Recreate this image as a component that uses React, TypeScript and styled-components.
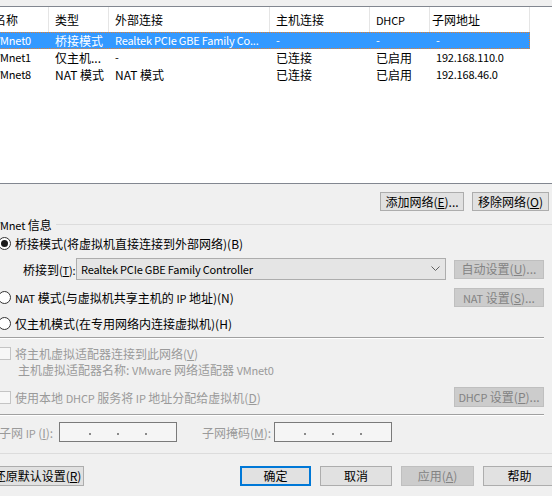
import React from 'react';
import styled, { createGlobalStyle } from 'styled-components';

const GlobalStyle = createGlobalStyle`
  html, body {
    margin: 0;
    padding: 0;
    background: #f0f0f0;
    overflow: hidden;
  }
  body {
    width: 552px;
    height: 496px;
  }
`;

const Dialog = styled.div`
  width: 572px;
  margin-left: -12px;
  padding-top: 6px;
  font-family: "Noto Sans CJK SC", "Noto Sans", sans-serif;
  font-size: 12px;
  color: #000;
`;

// latin runs in the original render narrower than the CJK text around them
const Lat = styled.span`
  font-size: 11px;
  letter-spacing: -0.2px;
`;

/* ---------- list view ---------- */

const List = styled.div`
  height: 176px;
  background: #fff;
  border-top: 1px solid #828790;
  border-bottom: 1px solid #828790;
`;

const HeaderRow = styled.div`
  display: flex;
  height: 25px;
`;

const HeaderCell = styled.div<{ $w: number; $pad?: number }>`
  width: ${p => p.$w}px;
  box-sizing: border-box;
  border-right: 1px solid #e5e5e5;
  padding-left: ${p => p.$pad ?? 6}px;
  line-height: 25px;
  white-space: nowrap;
  overflow: hidden;
`;

const Row = styled.div<{ $selected?: boolean }>`
  display: flex;
  width: 542px;
  height: 17px;
  box-sizing: border-box;
  background: ${p => (p.$selected ? '#3399ff' : 'transparent')};
  color: ${p => (p.$selected ? '#fff' : '#000')};
  outline: ${p => (p.$selected ? '1px dotted #e8802a' : 'none')};
  outline-offset: -1px;
`;

const Cell = styled.div<{ $w: number; $latin?: boolean }>`
  width: ${p => p.$w}px;
  padding-left: 6px;
  box-sizing: border-box;
  line-height: 17px;
  white-space: nowrap;
  overflow: hidden;
  font-size: ${p => (p.$latin ? '11px' : '12px')};
  letter-spacing: ${p => (p.$latin ? '-0.2px' : '0')};
`;

/* ---------- buttons ---------- */

const Button = styled.button<{ $w: number; $h?: number; $default?: boolean }>`
  width: ${p => p.$w}px;
  height: ${p => p.$h ?? 20}px;
  box-sizing: border-box;
  padding: 0;
  background: #e1e1e1;
  border: ${p => (p.$default ? '2px solid #0078d7' : '1px solid #adadad')};
  font: inherit;
  line-height: 16px;
  color: #000;
  white-space: nowrap;
  flex: none;

  &:disabled {
    background: #cccccc;
    border-color: #bfbfbf;
    color: #838383;
  }
`;

const ActionBar = styled.div`
  display: flex;
  justify-content: flex-end;
  gap: 8px;
  margin-top: 8px;
  padding-right: 11px;
`;

/* ---------- group ---------- */

const GroupTitle = styled.div`
  display: flex;
  align-items: center;
  margin-top: 6px;
  height: 15px;
  padding-left: 6px;
`;

const GroupLine = styled.div`
  flex: 1;
  margin-left: 4px;
  border-top: 1px solid #dcdcdc;
`;

const OptionRow = styled.div<{ $top: number; $h: number }>`
  display: flex;
  align-items: center;
  justify-content: space-between;
  margin-top: ${p => p.$top}px;
  height: ${p => p.$h}px;
  padding-left: 10px;
  padding-right: 16px;
`;

const Choice = styled.label<{ $disabled?: boolean }>`
  display: flex;
  align-items: center;
  gap: 4px;
  color: ${p => (p.$disabled ? '#9a9a9a' : '#000')};
  white-space: nowrap;
`;

const RadioDot = styled.span<{ $checked?: boolean }>`
  width: 13px;
  height: 13px;
  box-sizing: border-box;
  border: 1px solid #333;
  border-radius: 50%;
  background: #fff;
  display: flex;
  align-items: center;
  justify-content: center;

  &::after {
    content: '';
    display: ${p => (p.$checked ? 'block' : 'none')};
    width: 7px;
    height: 7px;
    border-radius: 50%;
    background: #1a1a1a;
  }
`;

const CheckBox = styled.span`
  width: 13px;
  height: 13px;
  box-sizing: border-box;
  border: 1px solid #c4c4c4;
  background: #f7f7f7;
`;

const BridgeRow = styled.div`
  display: flex;
  align-items: center;
  margin-top: 7px;
  height: 22px;
  padding-left: 35px;
`;

const BridgeLabel = styled.span`
  width: 53px;
  flex: none;
  white-space: nowrap;
`;

const Combo = styled.div`
  width: 370px;
  height: 22px;
  box-sizing: border-box;
  border: 1px solid #adadad;
  background: #e5e5e5;
  display: flex;
  align-items: center;
  justify-content: space-between;
  padding: 0 5px 0 4px;
  margin-right: 8px;
`;

const Separator = styled.div<{ $top: number }>`
  margin-top: ${p => p.$top}px;
  margin-right: 16px;
  border-top: 1px solid #a0a0a0;
  border-bottom: 1px solid #fff;
`;

const AdapterName = styled.div`
  margin-top: 1px;
  height: 16px;
  line-height: 16px;
  padding-left: 30px;
  color: #9a9a9a;
  white-space: nowrap;
`;

/* ---------- subnet ---------- */

const SubnetRow = styled.div`
  display: flex;
  align-items: center;
  margin-top: 6px;
  height: 20px;
  padding-left: 11px;
`;

const SubnetLabel = styled.span<{ $w: number; $gap?: number }>`
  width: ${p => p.$w}px;
  margin-left: ${p => p.$gap ?? 0}px;
  color: #9a9a9a;
  white-space: nowrap;
`;

const IpBox = styled.div`
  width: 118px;
  height: 20px;
  box-sizing: border-box;
  border: 1px solid #7a7a7a;
  background: #f5f5f5;
  display: flex;
  align-items: center;
  justify-content: center;
  gap: 26px;
`;

const IpDot = styled.span`
  width: 2px;
  height: 2px;
  margin-top: 4px;
  background: #8a8a8a;
`;

const LightLine = styled.div`
  margin-top: 11px;
  border-top: 1px solid #dcdcdc;
`;

const Footer = styled.div`
  display: flex;
  align-items: center;
  gap: 9px;
  margin-top: 12px;
  height: 20px;
  padding-left: 3px;
  padding-right: 4px;
`;

const Spacer = styled.div`
  flex: 1;
`;

const columns = [61, 60, 161, 100, 60, 100];

const rows = [
  ['VMnet0', '桥接模式', 'Realtek PCIe GBE Family Co...', '-', '-', '-'],
  ['VMnet1', '仅主机...', '-', '已连接', '已启用', '192.168.110.0'],
  ['VMnet8', 'NAT 模式', 'NAT 模式', '已连接', '已启用', '192.168.46.0'],
];

const isLatin = (s: string) => /^[\x20-\x7e]+$/.test(s);

const Chevron = () => (
  <svg width="9" height="6" viewBox="0 0 9 6">
    <polyline points="0.5,0.5 4.5,4.5 8.5,0.5" fill="none" stroke="#606060" strokeWidth="1" />
  </svg>
);

const IpField = () => (
  <IpBox>
    <IpDot />
    <IpDot />
    <IpDot />
  </IpBox>
);

export default function App() {
  return (
    <>
      <GlobalStyle />
      <Dialog>
        <List>
          <HeaderRow>
            <HeaderCell $w={columns[0]}>名称</HeaderCell>
            <HeaderCell $w={columns[1]}>类型</HeaderCell>
            <HeaderCell $w={columns[2]}>外部连接</HeaderCell>
            <HeaderCell $w={columns[3]}>主机连接</HeaderCell>
            <HeaderCell $w={columns[4]}><Lat>DHCP</Lat></HeaderCell>
            <HeaderCell $w={columns[5]} $pad={2}>子网地址</HeaderCell>
          </HeaderRow>
          {rows.map((r, i) => (
            <Row key={r[0]} $selected={i === 0}>
              {r.map((v, j) => (
                <Cell key={j} $w={columns[j]} $latin={isLatin(v)}>{v}</Cell>
              ))}
            </Row>
          ))}
        </List>

        <ActionBar>
          <Button $w={84} $h={19}>添加网络(<u>E</u>)...</Button>
          <Button $w={77} $h={19}>移除网络(<u>O</u>)</Button>
        </ActionBar>

        <GroupTitle>
          <Lat>VMnet</Lat>&nbsp;信息
          <GroupLine />
        </GroupTitle>

        <OptionRow $top={3} $h={16}>
          <Choice>
            <RadioDot $checked />
            <span>桥接模式(将虚拟机直接连接到外部网络)(B)</span>
          </Choice>
        </OptionRow>

        <BridgeRow>
          <BridgeLabel>桥接到<Lat>(<u>T</u>):</Lat></BridgeLabel>
          <Combo>
            <Lat>Realtek PCIe GBE Family Controller</Lat>
            <Chevron />
          </Combo>
          <Button $w={90} $h={19} disabled>自动设置(<u>U</u>)...</Button>
        </BridgeRow>

        <OptionRow $top={8} $h={19}>
          <Choice>
            <RadioDot />
            <span><Lat>NAT</Lat> 模式(与虚拟机共享主机的 <Lat>IP</Lat> 地址)(N)</span>
          </Choice>
          <Button $w={90} $h={19} disabled><Lat>NAT</Lat> 设置(<u>S</u>)...</Button>
        </OptionRow>

        <OptionRow $top={8} $h={16}>
          <Choice>
            <RadioDot />
            <span>仅主机模式(在专用网络内连接虚拟机)(H)</span>
          </Choice>
        </OptionRow>

        <Separator $top={6} />

        <OptionRow $top={6} $h={16}>
          <Choice $disabled>
            <CheckBox />
            <span>将主机虚拟适配器连接到此网络(<u>V</u>)</span>
          </Choice>
        </OptionRow>
        <AdapterName>主机虚拟适配器名称: <Lat>VMware</Lat> 网络适配器 <Lat>VMnet0</Lat></AdapterName>

        <OptionRow $top={9} $h={20}>
          <Choice $disabled>
            <CheckBox />
            <span>使用本地 <Lat>DHCP</Lat> 服务将 <Lat>IP</Lat> 地址分配给虚拟机(<u>D</u>)</span>
          </Choice>
          <Button $w={90} disabled><Lat>DHCP</Lat> 设置(<u>P</u>)...</Button>
        </OptionRow>

        <Separator $top={7} />

        <SubnetRow>
          <SubnetLabel $w={60}>子网 <Lat>IP</Lat> (<u>I</u>):</SubnetLabel>
          <IpField />
          <SubnetLabel $w={72} $gap={25}>子网掩码(<u>M</u>):</SubnetLabel>
          <IpField />
        </SubnetRow>

        <LightLine />

        <Footer>
          <Button $w={93}>还原默认设置(<u>R</u>)</Button>
          <Spacer />
          <Button $w={71} $default>确定</Button>
          <Button $w={72}>取消</Button>
          <Button $w={73} disabled>应用(<u>A</u>)</Button>
          <Button $w={73}>帮助</Button>
        </Footer>
      </Dialog>
    </>
  );
}
